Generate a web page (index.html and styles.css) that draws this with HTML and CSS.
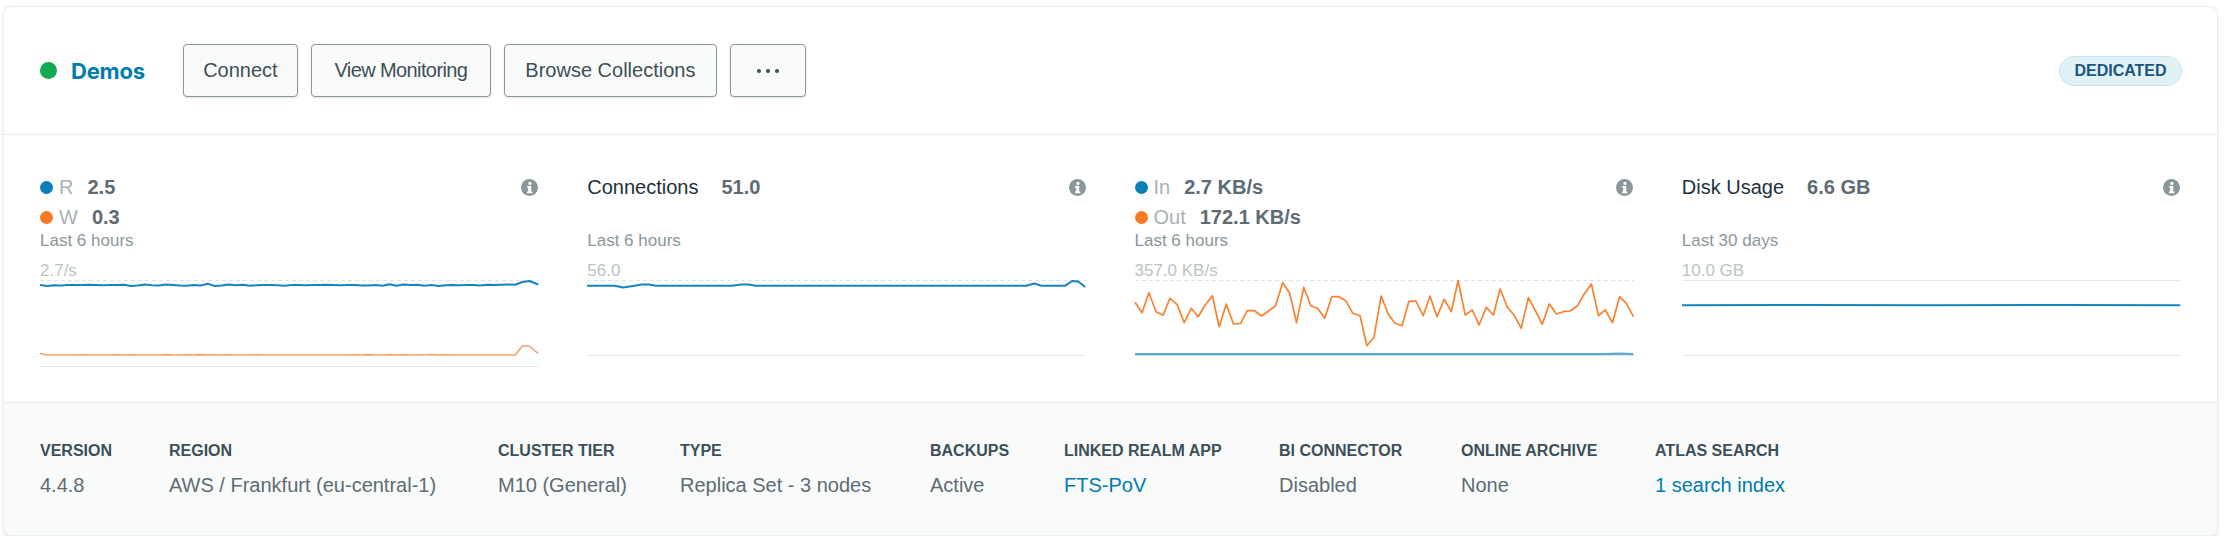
FILE: index.html
```html
<!DOCTYPE html>
<html lang="en">
<head>
<meta charset="utf-8">
<title>Demos cluster</title>
<link rel="stylesheet" href="styles.css">
</head>
<body>
<div class="card">
  <header class="card-header">
    <div class="cluster-name">
      <span class="status-dot"></span>
      <span class="name-text">Demos</span>
    </div>
    <div class="actions">
      <button class="btn btn-connect">Connect</button>
      <button class="btn btn-monitor">View Monitoring</button>
      <button class="btn btn-browse">Browse Collections</button>
      <button class="btn btn-more" aria-label="More">
        <svg width="24" height="6" viewBox="0 0 24 6"><circle cx="3" cy="3" r="2.1" fill="#3D4F58"/><circle cx="12" cy="3" r="2.1" fill="#3D4F58"/><circle cx="21" cy="3" r="2.1" fill="#3D4F58"/></svg>
      </button>
    </div>
    <span class="badge">DEDICATED</span>
  </header>

  <section class="metrics">
    <!-- Operations -->
    <div class="metric">
      <div class="metric-head">
        <div class="head-row">
          <span class="legend-dot blue"></span><span class="legend-label">R</span><span class="metric-value">2.5</span>
          <svg class="info" width="17" height="17" viewBox="0 0 16 16"><circle cx="8" cy="8" r="8" fill="#89979B"/><circle cx="8.4" cy="4.2" r="1.5" fill="#fff"/><path d="M5.8 6.6h3.8v5.2h1.1v1.6H5.6v-1.6h1.1V8.2h-0.9z" fill="#fff"/></svg>
        </div>
        <div class="head-row">
          <span class="legend-dot orange"></span><span class="legend-label">W</span><span class="metric-value">0.3</span>
        </div>
      </div>
      <div class="period">Last 6 hours</div>
      <div class="axis-label">2.7/s</div>
      <svg class="chart" viewBox="0 0 500 90" preserveAspectRatio="none">
        <line x1="0" y1="0.5" x2="500" y2="0.5" class="dash"/>
        <line x1="0" y1="86.5" x2="500" y2="86.5" class="axis"/>
        <polyline class="line-blue" points="0,5 7,6 14,5.2 21,5.5 28,5 35,5 42,5 49,4.8 56,5 63,5.2 70,5 77,5 84,4.8 91,6 98,5.5 105,4.5 112,5.2 119,5.5 126,4.5 133,5 140,5.5 147,5.8 154,5 161,5.5 168,3.8 175,6 182,5.5 189,4.5 196,5.2 203,4.8 210,5.8 217,5.2 224,5 231,5 238,5.2 245,5.8 252,5 259,5 266,5.2 273,5 280,5 287,4.8 294,5 301,5.2 308,5 315,5 322,5.5 329,5.5 336,5 343,5.8 350,4.2 357,5.8 364,4.5 371,5 378,4.8 385,5.8 392,5 399,6 406,5.2 413,5 420,5.2 427,5 434,5 441,5.5 448,4.8 455,5 462,4.8 469,4.5 476,4.8 483,2 490,1 499,4.5"/>
        <polyline class="line-orange-light" points="0,73.5 7,75 14,75 21,75 28,75 35,75 42,74.8 49,75 56,75 63,75 70,75 77,74.8 84,75 91,74.8 98,75 105,75 112,75 119,75 126,74.6 133,75 140,75 147,74.8 154,75 161,74.6 168,75 175,74.8 182,75 189,74.8 196,75 203,75 210,75 217,74.8 224,75 231,75 238,75 245,75 252,75 259,75 266,75 273,75 280,75 287,75 294,75 301,75 308,75 315,74.8 322,75 329,74.6 336,75 343,75 350,74.6 357,75 364,74.8 371,75 378,75 385,74.8 392,74.6 399,75 406,74.8 413,75 420,75 427,75 434,75 441,75 448,75 455,75 462,75 469,75 476,75 483,66 490,66 499,73.5"/>
      </svg>
    </div>

    <!-- Connections -->
    <div class="metric">
      <div class="metric-head">
        <div class="head-row">
          <span class="metric-title">Connections</span><span class="metric-value wide">51.0</span>
          <svg class="info" width="17" height="17" viewBox="0 0 16 16"><circle cx="8" cy="8" r="8" fill="#89979B"/><circle cx="8.4" cy="4.2" r="1.5" fill="#fff"/><path d="M5.8 6.6h3.8v5.2h1.1v1.6H5.6v-1.6h1.1V8.2h-0.9z" fill="#fff"/></svg>
        </div>
      </div>
      <div class="period">Last 6 hours</div>
      <div class="axis-label">56.0</div>
      <svg class="chart" viewBox="0 0 500 90" preserveAspectRatio="none">
        <line x1="0" y1="0.5" x2="500" y2="0.5" class="dash"/>
        <line x1="0" y1="75.5" x2="500" y2="75.5" class="axis"/>
        <polyline class="line-blue" points="0,5.7 28,5.7 36,7.5 46,6 55,4.6 62,4.6 69,5.7 145,5.7 155,4.5 162,4.6 169,5.7 440,5.7 448,3.5 455,5.7 479,5.7 486,1 492,1.5 499,7"/>
      </svg>
    </div>

    <!-- Network -->
    <div class="metric">
      <div class="metric-head">
        <div class="head-row">
          <span class="legend-dot blue"></span><span class="legend-label">In</span><span class="metric-value">2.7 KB/s</span>
          <svg class="info" width="17" height="17" viewBox="0 0 16 16"><circle cx="8" cy="8" r="8" fill="#89979B"/><circle cx="8.4" cy="4.2" r="1.5" fill="#fff"/><path d="M5.8 6.6h3.8v5.2h1.1v1.6H5.6v-1.6h1.1V8.2h-0.9z" fill="#fff"/></svg>
        </div>
        <div class="head-row">
          <span class="legend-dot orange"></span><span class="legend-label">Out</span><span class="metric-value">172.1 KB/s</span>
        </div>
      </div>
      <div class="period">Last 6 hours</div>
      <div class="axis-label">357.0 KB/s</div>
      <svg class="chart" viewBox="0 0 500 90" preserveAspectRatio="none">
        <line x1="0" y1="0.5" x2="500" y2="0.5" class="dash"/>
        <line x1="0" y1="75.5" x2="500" y2="75.5" class="axis"/>
        <polyline class="line-blue-light" points="0,74.2 470,74.2 485,73.6 499,74.2"/>
        <polyline class="line-orange" points="0,22.3 7.1,32.7 13.9,12.7 21.1,31.7 28.2,35.3 35,18.3 42.1,24.3 49.3,42.7 56.4,28.3 63.2,36.7 70.3,25 77.5,15.7 84.3,46.7 91.4,24 98.6,44 105.7,43.3 112.5,30.7 119.7,30.7 126.8,36 134,30.7 140.7,26 147.9,2.7 155,13.3 161.8,42.7 169,7.3 176.1,25.7 182.9,28.3 190,38.3 197.1,16.7 204.3,16.7 211.1,20.7 218.2,33.3 225.4,35.7 232.2,65.7 239.3,57.3 246.5,16 253.6,34 260.4,43.3 267.5,45.7 274.3,21.3 281.4,21 288.6,35.7 295.4,16 302.5,36.7 309.6,19.3 316.8,31.7 323.6,0.5 330.7,35 337.8,30 344.6,45 351.8,27.3 358.9,35 365.7,9 372.8,26.7 380,35.7 386.8,48.3 393.9,17.7 401,30.7 407.8,44.3 415,24 422.1,34 428.9,31.7 436,31 443.2,25.7 449.9,14 457.1,4 464.2,35.7 471,30 478.2,42.7 485.3,16.7 492.1,23.3 499.2,36.7"/>
      </svg>
    </div>

    <!-- Disk -->
    <div class="metric">
      <div class="metric-head">
        <div class="head-row">
          <span class="metric-title">Disk Usage</span><span class="metric-value wide">6.6 GB</span>
          <svg class="info" width="17" height="17" viewBox="0 0 16 16"><circle cx="8" cy="8" r="8" fill="#89979B"/><circle cx="8.4" cy="4.2" r="1.5" fill="#fff"/><path d="M5.8 6.6h3.8v5.2h1.1v1.6H5.6v-1.6h1.1V8.2h-0.9z" fill="#fff"/></svg>
        </div>
      </div>
      <div class="period">Last 30 days</div>
      <div class="axis-label">10.0 GB</div>
      <svg class="chart" viewBox="0 0 500 90" preserveAspectRatio="none">
        <line x1="0" y1="0.5" x2="500" y2="0.5" class="axis"/>
        <line x1="0" y1="75.5" x2="500" y2="75.5" class="axis"/>
        <polyline class="line-blue" points="0,25.2 120,25 250,25.3 380,25 499,25.2"/>
      </svg>
    </div>
  </section>

  <footer class="details">
    <div class="detail">
      <div class="detail-label">VERSION</div>
      <div class="detail-value">4.4.8</div>
    </div>
    <div class="detail">
      <div class="detail-label">REGION</div>
      <div class="detail-value">AWS / Frankfurt (eu-central-1)</div>
    </div>
    <div class="detail">
      <div class="detail-label">CLUSTER TIER</div>
      <div class="detail-value">M10 (General)</div>
    </div>
    <div class="detail">
      <div class="detail-label">TYPE</div>
      <div class="detail-value">Replica Set - 3 nodes</div>
    </div>
    <div class="detail">
      <div class="detail-label">BACKUPS</div>
      <div class="detail-value">Active</div>
    </div>
    <div class="detail">
      <div class="detail-label">LINKED REALM APP</div>
      <div class="detail-value"><a class="link" href="#">FTS-PoV</a></div>
    </div>
    <div class="detail">
      <div class="detail-label">BI CONNECTOR</div>
      <div class="detail-value">Disabled</div>
    </div>
    <div class="detail">
      <div class="detail-label">ONLINE ARCHIVE</div>
      <div class="detail-value">None</div>
    </div>
    <div class="detail">
      <div class="detail-label">ATLAS SEARCH</div>
      <div class="detail-value"><a class="link" href="#">1 search index</a></div>
    </div>
  </footer>
</div>
</body>
</html>
```

FILE: styles.css
```css
* { box-sizing: border-box; }

html, body {
  margin: 0;
  padding: 0;
  background: #ffffff;
}

body {
  font-family: "Liberation Sans", Arial, sans-serif;
  color: #3D4F58;
}

.card {
  margin: 6px 0 0 3px;
  width: 2215px;
  border: 1px solid #E7EEEC;
  border-radius: 8px;
  overflow: hidden;
  background: #ffffff;
  box-shadow: 0 4px 4px -1px rgba(6, 22, 33, 0.09), 0 0 3px rgba(6, 22, 33, 0.04);
}

/* Header */
.card-header {
  height: 128px;
  display: flex;
  align-items: center;
  padding: 0 35px 0 36px;
  border-bottom: 1px solid #E7EEEC;
}

.cluster-name {
  display: flex;
  align-items: center;
}

.status-dot {
  width: 17px;
  height: 17px;
  border-radius: 50%;
  background: #13AA52;
}

.name-text {
  margin-left: 14px;
  font-family: Inter, "Liberation Sans", sans-serif;
  font-weight: 700;
  font-size: 22px;
  color: #007CAD;
  letter-spacing: -0.2px;
}

.actions {
  display: flex;
  gap: 13px;
  margin-left: 38px;
}

.btn {
  height: 53px;
  padding: 0;
  border: 1px solid #89979B;
  border-radius: 4px;
  background: #F9FBFA;
  box-shadow: 0 1px 2px rgba(6, 22, 33, 0.12);
  font-family: "Liberation Sans", Arial, sans-serif;
  font-size: 20px;
  color: #3D4F58;
  display: flex;
  align-items: center;
  justify-content: center;
}

.btn-connect { width: 115px; }
.btn-monitor { width: 180px; letter-spacing: -0.6px; }
.btn-browse { width: 213px; }
.btn-more { width: 76px; }

.badge {
  margin-left: auto;
  height: 30px;
  width: 123px;
  border: 1px solid #C5E4F2;
  border-radius: 15px;
  background: #E1F2F6;
  color: #1A567E;
  font-weight: 700;
  font-size: 16px;
  display: flex;
  align-items: center;
  justify-content: center;
}

/* Metrics */
.metrics {
  display: grid;
  grid-template-columns: repeat(4, 1fr);
  column-gap: 48px;
  padding: 37px 36px 32px 36px;
}

.metric {
  display: flex;
  flex-direction: column;
  min-width: 0;
}

.metric-head {
  height: 60px;
}

.head-row {
  height: 30px;
  display: flex;
  align-items: center;
  font-size: 20px;
}

.legend-dot {
  width: 13px;
  height: 13px;
  border-radius: 50%;
  margin-right: 6px;
}
.legend-dot.blue { background: #0B7FB8; }
.legend-dot.orange { background: #F97A22; }

.legend-label {
  color: #A7B2B6;
}

.metric-title {
  color: #21313C;
}

.metric-value {
  margin-left: 14px;
  font-weight: 700;
  color: #5D6C74;
}
.metric-value.wide { margin-left: 23px; }

.info {
  margin-left: auto;
  margin-right: 1px;
}

.period {
  height: 18px;
  line-height: 18px;
  font-size: 17px;
  color: #89979B;
}

.axis-label {
  margin-top: 12px;
  height: 18px;
  line-height: 18px;
  font-size: 17px;
  color: #B8C4C2;
}

.chart {
  display: block;
  width: 100%;
  height: 90px;
  overflow: visible;
}

.chart .dash {
  stroke: #DDE3E4;
  stroke-width: 1;
  stroke-dasharray: 4 3;
  vector-effect: non-scaling-stroke;
}
.chart .axis {
  stroke: #E7EAEB;
  stroke-width: 1;
  vector-effect: non-scaling-stroke;
}
.chart polyline {
  fill: none;
  stroke-linejoin: round;
  vector-effect: non-scaling-stroke;
}
.line-blue { stroke: #1585BF; stroke-width: 2; }
.line-blue-light { stroke: #5EA9D2; stroke-width: 2.2; }
.line-orange { stroke: #F8822F; stroke-width: 1.7; }
.line-orange-light { stroke: #F7A06A; stroke-width: 1.6; }

/* Footer details */
.details {
  display: grid;
  grid-template-columns: 129px 329px 182px 250px 134px 215px 182px 194px 1fr;
  padding: 38px 36px 38px 36px;
  background: #F9FBFA;
  border-top: 1px solid #E7EEEC;
}

.detail-label {
  height: 20px;
  line-height: 20px;
  font-size: 16px;
  font-weight: 700;
  color: #3D4F58;
  white-space: nowrap;
}

.detail-value {
  margin-top: 12px;
  height: 24px;
  line-height: 24px;
  font-size: 20px;
  color: #5D6C74;
  white-space: nowrap;
}

.link {
  color: #007CAD;
  text-decoration: none;
}
```
